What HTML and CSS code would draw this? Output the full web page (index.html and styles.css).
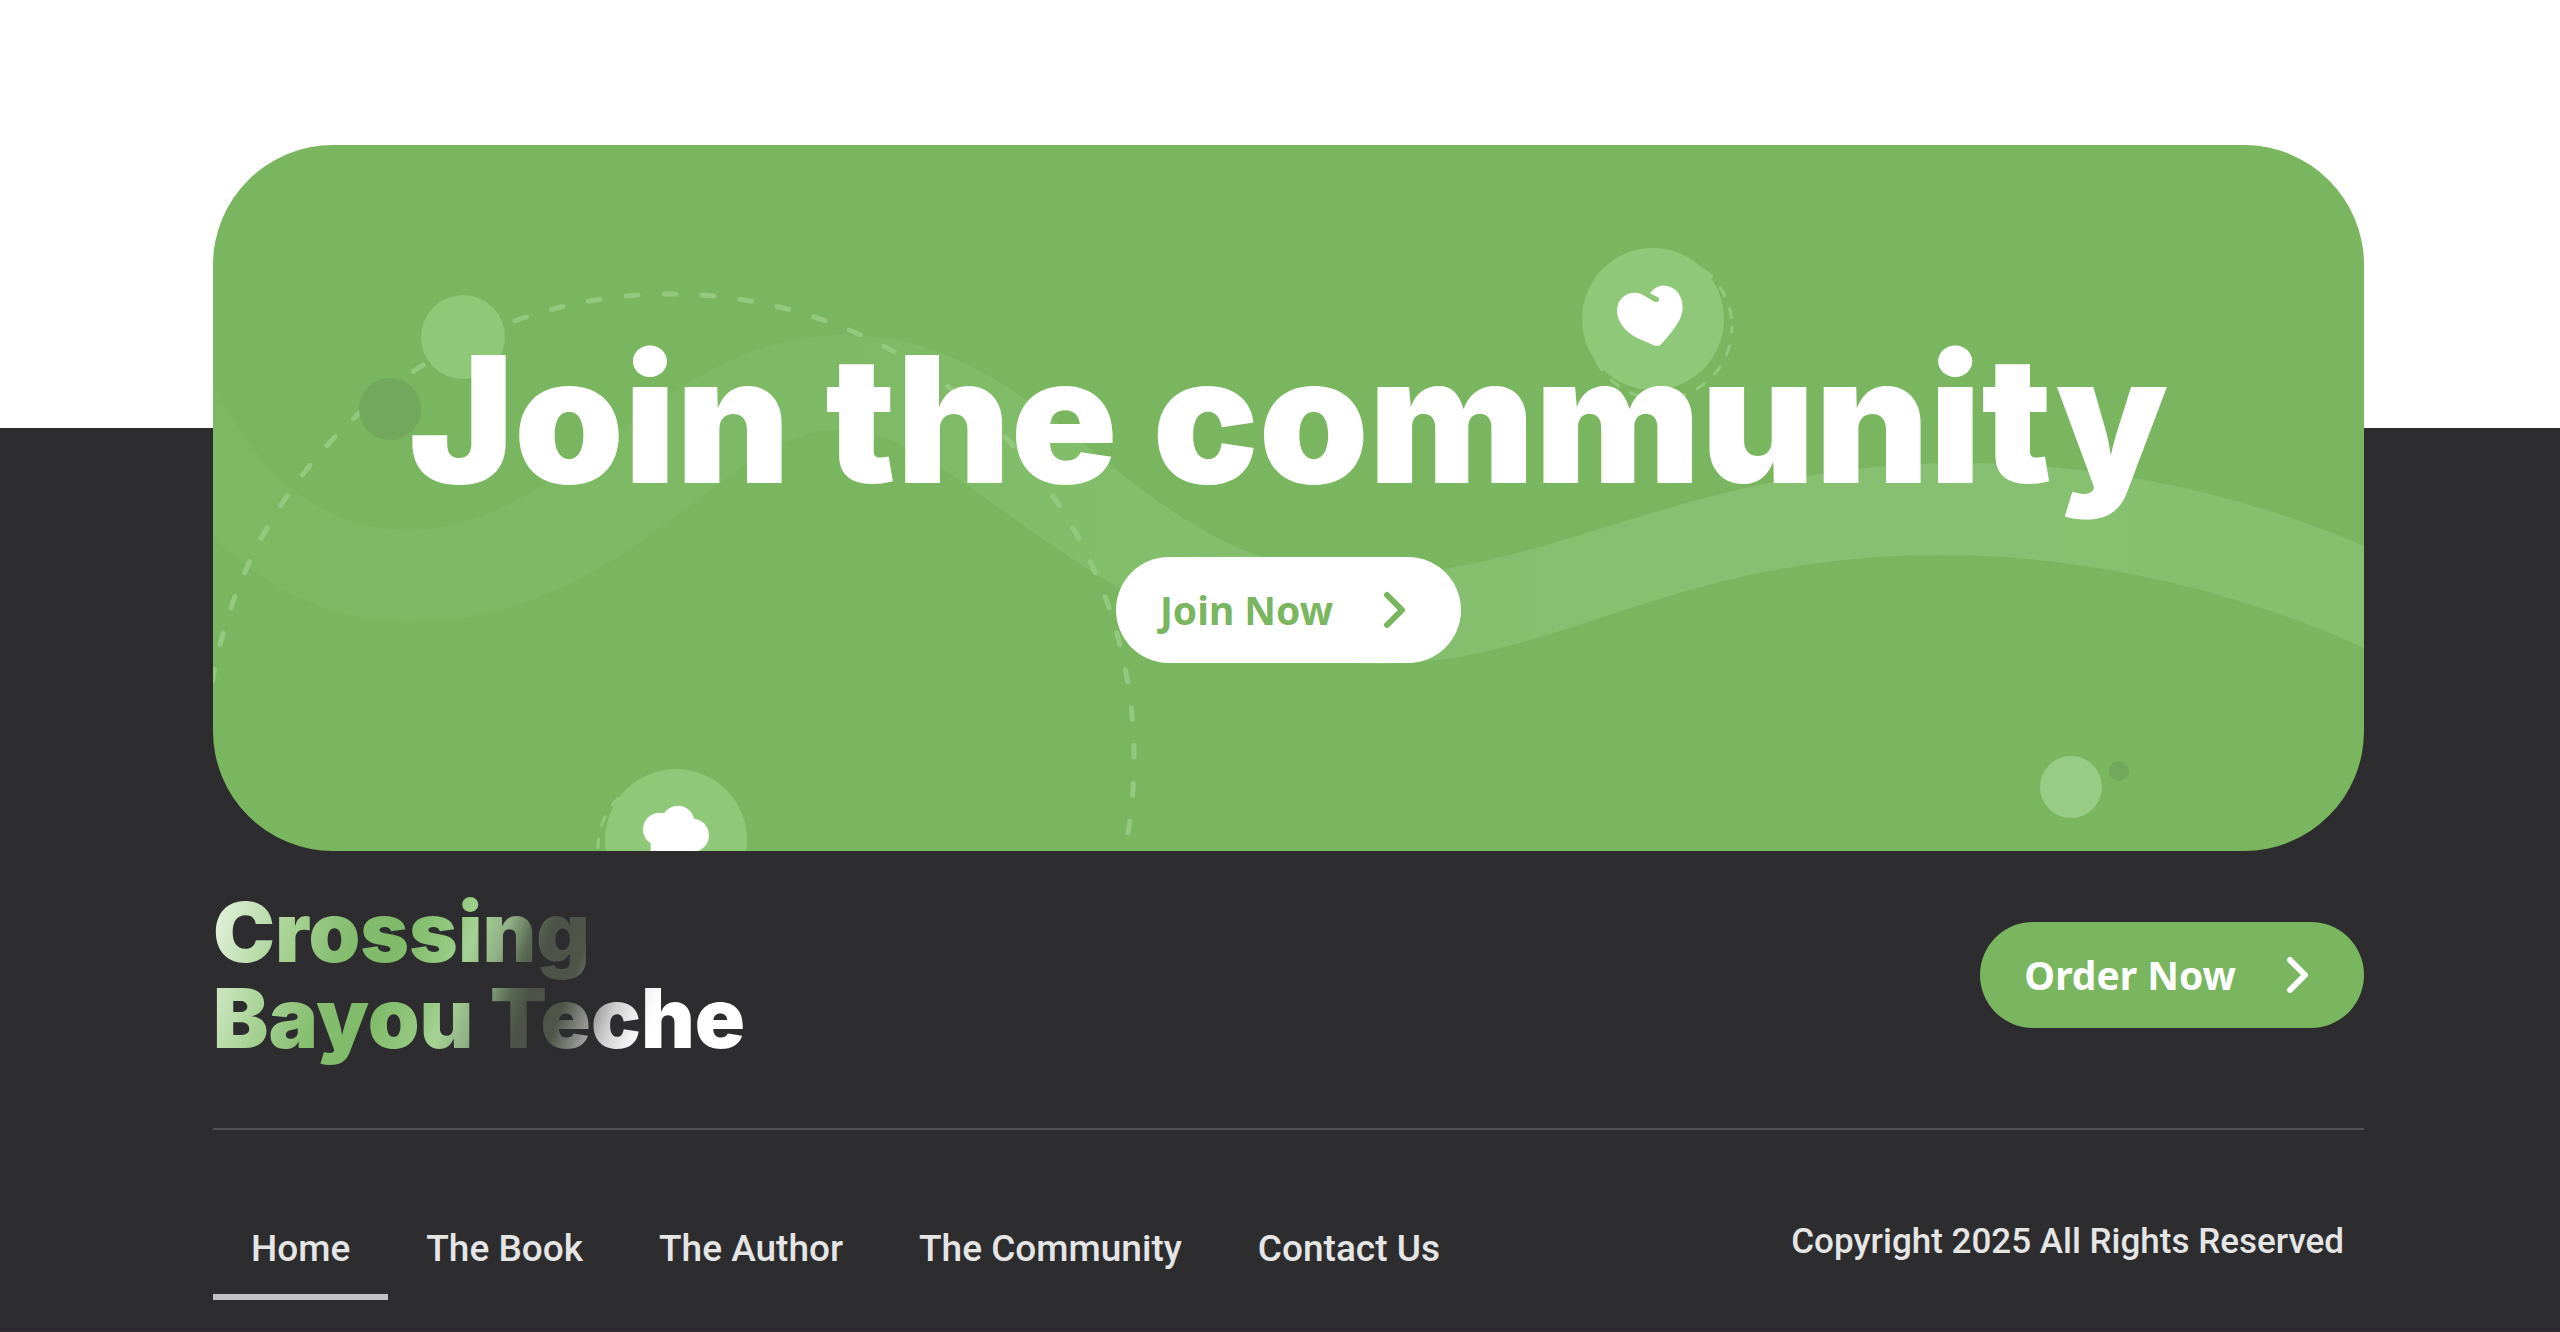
FILE: index.html
```html
<!DOCTYPE html>
<html lang="en">
<head>
  <meta charset="utf-8">
  <meta name="viewport" content="width=device-width, initial-scale=1">
  <title>Crossing Bayou Teche</title>
  <link rel="stylesheet" href="styles.css">
</head>
<body>
  <main class="cta">
    <section class="card">
      <svg class="card-art" viewBox="213 145 2151 706" preserveAspectRatio="xMidYMid slice" aria-hidden="true">
        <defs>
          <linearGradient id="band" x1="0" x2="1" y1="0" y2="0">
            <stop offset="0" stop-color="#7db963"/>
            <stop offset=".3" stop-color="#7eb965"/>
            <stop offset=".42" stop-color="#83be6b"/>
            <stop offset=".75" stop-color="#88c072"/>
            <stop offset="1" stop-color="#84c06d"/>
          </linearGradient>
        </defs>
        <path fill="url(#band)" d="M213 386C262 480 325 530 408 530C570 530 660 335 843 335C1060 335 1130 575 1370 575C1550 575 1690 463 1965 463C2110 463 2250 497 2364 546V648C2230 587 2080 555 1941 555C1670 555 1560 664 1378 664C1110 664 960 429 843 429C720 429 630 622 408 622C335 622 265 590 213 537Z"/>
        <path class="dashes" d="M670 294A464 464 0 0 1 1134 758A464 464 0 0 1 1124 855"/>
        <path class="dashes" d="M670 294A464 464 0 0 0 206 758"/>
        <circle class="bubble" cx="463" cy="337" r="42"/>
        <circle class="bubble-dark" cx="390" cy="409" r="31"/>
        <circle class="orbit" cx="1660" cy="327" r="72"/>
        <circle class="bubble" cx="1653" cy="319" r="71"/>
        <path fill="#fff" transform="translate(1560 230) scale(.3333)" d="M270 190C285 171 300 166 315 167C350 170 369 200 368 235C366 270 345 295 305 341C298 349 290 349 280 345L230 323C195 305 172 275 171 243C171 210 195 188 225 188C245 188 258 201 285 216C295 219 302 207 294 202Z"/>
        <circle class="orbit" cx="670" cy="848" r="72"/>
        <circle class="bubble" cx="676" cy="840" r="71"/>
        <g fill="#fff" transform="translate(580 750) scale(.3333)">
          <circle cx="239" cy="238" r="50"/>
          <circle cx="294" cy="216" r="49"/>
          <circle cx="337" cy="256" r="50"/>
          <path d="M212 270V320H340V230H230Z"/>
        </g>
        <circle class="bubble-light" cx="2071" cy="787" r="31"/>
        <circle class="bubble-dark" cx="2119" cy="771" r="10"/>
      </svg>
      <h1 class="card-title">Join the community</h1>
      <a class="btn btn-light" href="#join">Join Now
        <svg class="chevron" viewBox="0 0 24 38" aria-hidden="true"><path d="M4 4L19 19L4 34"/></svg>
      </a>
    </section>
  </main>
  <footer class="footer">
    <div class="footer-top">
      <a class="logo" href="#home">Crossing<br>Bayou Teche</a>
      <a class="btn btn-green" href="#order">Order Now
        <svg class="chevron" viewBox="0 0 24 38" aria-hidden="true"><path d="M4 4L19 19L4 34"/></svg>
      </a>
    </div>
    <div class="footer-bottom">
      <nav class="nav" aria-label="Footer">
        <a class="nav-link nav-link-active" href="#home" aria-current="page">Home</a>
        <a class="nav-link" href="#book">The Book</a>
        <a class="nav-link" href="#author">The Author</a>
        <a class="nav-link" href="#community">The Community</a>
        <a class="nav-link" href="#contact">Contact Us</a>
      </nav>
      <p class="copyright">Copyright 2025 All Rights Reserved</p>
    </div>
  </footer>
</body>
</html>
```
FILE: styles.css
```css
* {
  box-sizing: border-box;
}

body {
  margin: 0;
  background: #2d2d2f;
  font-family: "Noto Sans", "Open Sans", sans-serif;
}

a {
  text-decoration: none;
}

.cta {
  padding: 145px 196px 0 213px;
  background: linear-gradient(#fff 428px, #2d2d2f 428px);
}

.card {
  position: relative;
  display: flex;
  flex-direction: column;
  align-items: center;
  gap: 48px;
  min-height: 706px;
  padding-top: 184px;
  overflow: hidden;
  border-radius: 120px;
  background: #7ab55f;
}

.card-art {
  position: absolute;
  inset: 0;
  width: 100%;
  height: 100%;
}

.bubble {
  fill: #90c87a;
}

.bubble-light {
  fill: #98cb83;
}

.bubble-dark {
  fill: #72a85c;
}

.dashes,
.orbit {
  fill: none;
  stroke: #93c97e;
  stroke-linecap: round;
}

.dashes {
  stroke-width: 5;
  stroke-dasharray: 12 26;
  stroke-dashoffset: 6;
}

.orbit {
  stroke-width: 3;
  stroke-dasharray: 9 14;
  stroke-dashoffset: 4;
}

.card-title {
  position: relative;
  margin: 0;
  color: #fff;
  font: 900 176px/180px Inter, sans-serif;
  white-space: nowrap;
}

.btn {
  position: relative;
  display: flex;
  align-items: center;
  gap: 50px;
  height: 106px;
  padding: 0 54px 0 44px;
  border-radius: 53px;
  font-size: 39px;
  font-weight: 700;
  line-height: 48px;
  white-space: nowrap;
}

.btn-light {
  background: #fff;
  color: #7ab55f;
}

.btn-green {
  background: #7ab55f;
  color: #fff;
}

.chevron {
  width: 24px;
  height: 38px;
  fill: none;
  stroke: currentColor;
  stroke-width: 6;
  stroke-linecap: round;
  stroke-linejoin: round;
}

.footer {
  padding: 34px 196px 28px 213px;
  border-bottom: 2px solid #2a2430;
}

.footer-top {
  display: flex;
  align-items: center;
  justify-content: space-between;
  padding-bottom: 63px;
  border-bottom: 2px solid #505252;
}

.logo {
  padding: 4px 0;
  background: linear-gradient(110deg, #e4f2de 10px, #a6d192 90px, #86bd70 142px, #7fba68 193px, #95c982 243px, #a6d294 262px, #8fae85 292px, #5a6a54 316px, #4c5248 335px, #505549 370px, #a0a0a0 403px, #cfcfcf 420px, #f4f4f4 445px, #fff 460px);
  background-clip: text;
  color: transparent;
  font: 900 83px/86px Inter, sans-serif;
}

.footer-bottom {
  display: flex;
  align-items: flex-start;
  justify-content: space-between;
  padding-top: 84px;
}

.nav {
  display: flex;
}

.nav-link {
  padding: 10px 38px 20px;
  border-bottom: 6px solid transparent;
  color: #e5e5e5;
  font: 500 37px/50px Roboto, sans-serif;
  white-space: nowrap;
}

.nav-link-active {
  border-bottom-color: #c2c2c2;
}

.copyright {
  margin: 0;
  padding: 4px 20px 0 0;
  color: #e5e5e5;
  font: 500 35px/48px Roboto, sans-serif;
}
```
